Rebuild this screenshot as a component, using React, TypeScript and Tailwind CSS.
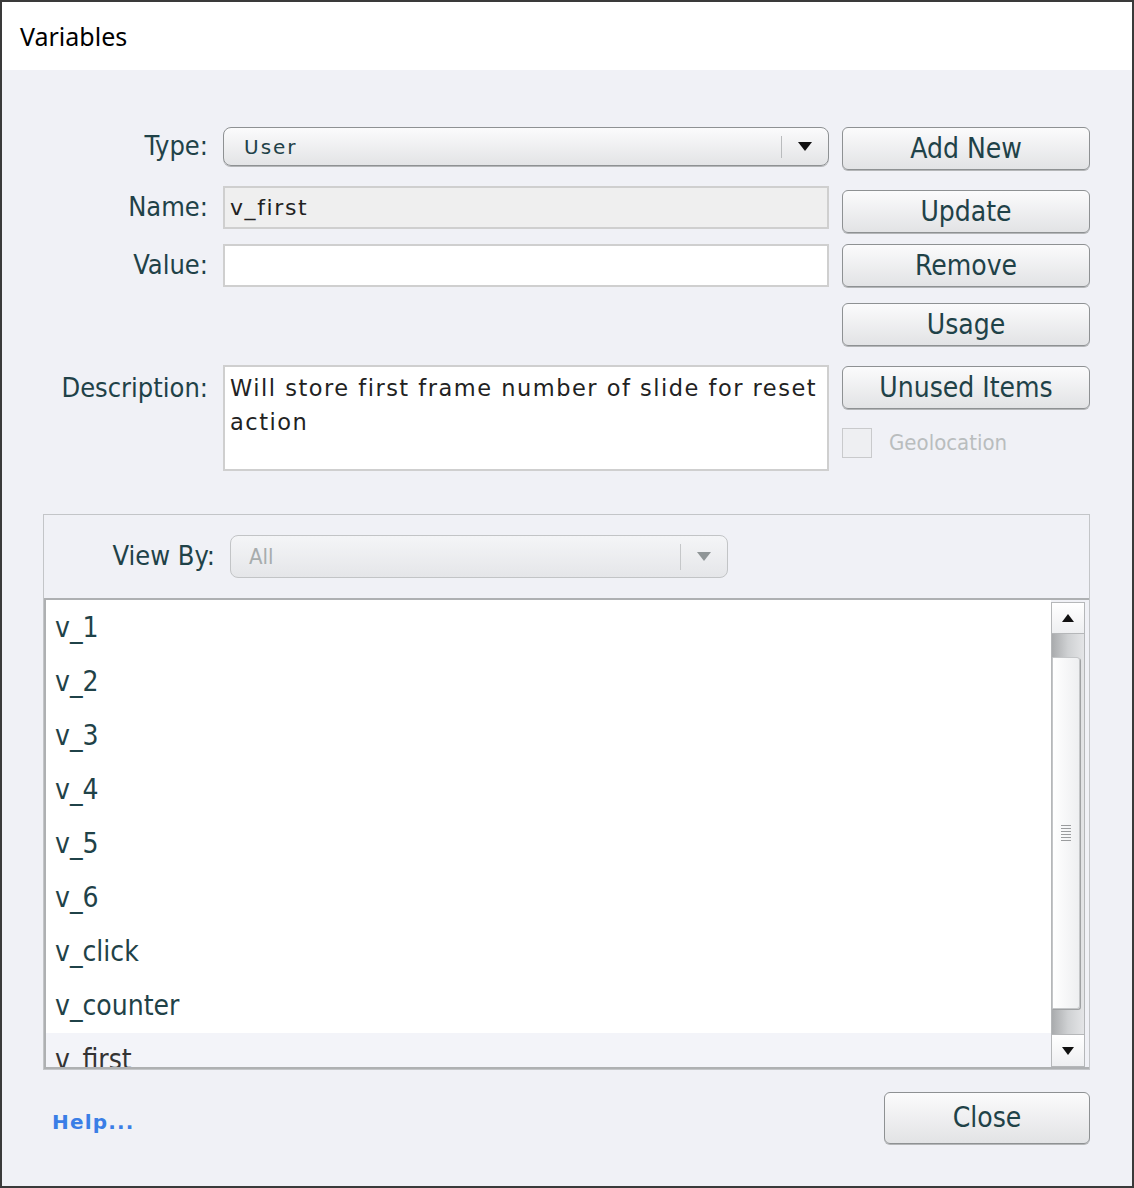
import { ReactNode } from 'react';

// condensed "Tahoma-like" face used across the dialog
const cond = "font-['DejaVu_Sans_Condensed','DejaVu_Sans',sans-serif] font-stretch-condensed";
const wide = "font-['DejaVu_Sans','Verdana',sans-serif]";

const Btn = ({ children, className = '' }: { children: ReactNode; className?: string }) => (
    <div
        className={`flex items-center justify-center rounded-[6px] border border-[#8e9193] bg-linear-to-b from-[#fbfbfc] to-[#e2e3e5] shadow-[0_1px_0_#b4b6b8] text-[28px] text-[#1f4248] ${cond} ${className}`}
    >
        {children}
    </div>
);

const Caret = ({ color }: { color: string }) => (
    <svg width="14" height="9" viewBox="0 0 14 9">
        <path d="M0 0 L14 0 L7 9 Z" fill={color} />
    </svg>
);

const Row = ({ label, children, className = '' }: { label: string; children: ReactNode; className?: string }) => (
    <div className={`flex items-center ${className}`}>
        <div className={`w-[206px] text-right text-[27px] text-[#1f4248] ${cond}`}>{label}</div>
        <div className="ml-[15px] w-[606px] h-full">{children}</div>
    </div>
);

const items = ['v_1', 'v_2', 'v_3', 'v_4', 'v_5', 'v_6', 'v_click', 'v_counter'];

const App = () => {
    return (
        <div className="w-[1134px] h-[1188px] border-2 border-[#3a3a3a] flex flex-col bg-[#f0f1f6] overflow-hidden">
            {/* TITLE BAR */}
            <div className="h-[68px] shrink-0 bg-white flex items-center pl-[18px] pt-[2px] text-[25px] text-black font-['Noto_Sans',sans-serif]">
                Variables
            </div>

            {/* FORM */}
            <div className="flex pt-[57px]">
                <div className="flex flex-col">
                    <Row label="Type:" className="h-[39px]">
                        <div className="h-full flex items-center rounded-[8px] border border-[#8e9193] bg-linear-to-b from-[#fbfbfc] to-[#e3e4e6] shadow-[0_1px_0_#b4b6b8]">
                            <span className={`ml-[20px] flex-1 text-[20px] tracking-[2px] text-[#1f4248] ${wide}`}>User</span>
                            <div className="w-px h-[22px] bg-[#b9bbbd]" />
                            <div className="w-[46px] flex justify-center">
                                <Caret color="#111" />
                            </div>
                        </div>
                    </Row>
                    <Row label="Name:" className="h-[43px] mt-[20px]">
                        <div className={`h-full flex items-center border-2 border-[#cfcfcf] bg-[#efefef] pl-[5px] text-[22px] tracking-[1.6px] text-[#222] ${wide}`}>
                            v_first
                        </div>
                    </Row>
                    <Row label="Value:" className="h-[43px] mt-[15px]">
                        <div className="h-full border-2 border-[#cfcfcf] bg-white" />
                    </Row>
                    <div className="flex items-start h-[106px] mt-[78px]">
                        <div className={`w-[206px] pt-[6px] text-right text-[27px] leading-[34px] text-[#1f4248] ${cond}`}>Description:</div>
                        <div className={`ml-[15px] w-[606px] h-full border-2 border-[#cfcfcf] bg-white pl-[5px] pt-[4px] text-[22.5px] leading-[34px] tracking-[1.5px] text-[#222] ${wide}`}>
                            Will store first frame number of slide for reset action
                        </div>
                    </div>
                </div>

                <div className="ml-[13px] w-[248px] flex flex-col">
                    <Btn className="h-[43px]">Add New</Btn>
                    <Btn className="h-[43px] mt-[20px]">Update</Btn>
                    <Btn className="h-[43px] mt-[11px]">Remove</Btn>
                    <Btn className="h-[43px] mt-[16px]">Usage</Btn>
                    <Btn className="h-[43px] mt-[20px]">Unused Items</Btn>
                    <div className="flex items-center mt-[17px]">
                        <div className="w-[30px] h-[30px] border border-[#c9cacc] bg-[#eeeff2]" />
                        <span className={`ml-[17px] text-[22px] text-[#b9bdbe] ${cond}`}>Geolocation</span>
                    </div>
                </div>
            </div>

            {/* VIEW BY GROUP */}
            <div className="ml-[41px] mt-[43px] w-[1047px] h-[556px] border border-[#c3c5c8] flex flex-col">
                <div className="flex items-center pt-[20px] pb-[20px]">
                    <div className={`w-[171px] text-right text-[27px] text-[#1f4248] ${cond}`}>View By:</div>
                    <div className="ml-[15px] w-[498px] h-[43px] flex items-center rounded-[8px] border border-[#c2c4c6] bg-linear-to-b from-[#f4f5f7] to-[#e5e6e9]">
                        <span className={`ml-[18px] flex-1 text-[22px] text-[#a7acad] ${cond}`}>All</span>
                        <div className="w-px h-[26px] bg-[#c5c7c9]" />
                        <div className="w-[46px] flex justify-center">
                            <Caret color="#8f9597" />
                        </div>
                    </div>
                </div>

                <div className="flex-1 flex border-t-2 border-l-2 border-b-2 border-[#aeb0b2] bg-white overflow-hidden">
                    <div className="flex-1 flex flex-col overflow-hidden pt-[1px]">
                        {items.map((it) => (
                            <div key={it} className={`h-[54px] shrink-0 flex items-center pl-[9px] text-[28px] text-[#1f4248] ${cond}`}>
                                {it}
                            </div>
                        ))}
                        <div className={`h-[54px] shrink-0 flex items-center pl-[9px] bg-[#f3f4f9] text-[28px] text-[#333] ${cond}`}>
                            v_first
                        </div>
                    </div>

                    {/* SCROLLBAR */}
                    <div className="w-[38px] shrink-0 bg-[#f0f1f6] flex flex-col pt-[2px] pr-[4px]">
                        <div className="h-[32px] border border-[#b5b7b9] bg-linear-to-b from-white to-[#eeeff1] flex items-center justify-center">
                            <svg width="12" height="8" viewBox="0 0 12 8"><path d="M6 0 L12 8 L0 8 Z" fill="#111" /></svg>
                        </div>
                        <div className="flex-1 flex flex-col border-x border-[#b5b7b9] bg-linear-to-r from-[#a9abad] via-[#cfd1d3] to-[#e4e5e7]">
                            <div className="h-[23px]" />
                            <div className="flex-1 mr-[4px] rounded-tr-[3px] rounded-br-[3px] border border-[#c4c6c8] bg-linear-to-r from-white to-[#eeeff1] shadow-[1px_1px_0_#9fa1a3] flex items-center justify-center">
                                <div className="flex flex-col gap-[2px] w-[10px]">
                                    <div className="h-px bg-[#9a9c9e]" />
                                    <div className="h-px bg-[#9a9c9e]" />
                                    <div className="h-px bg-[#9a9c9e]" />
                                    <div className="h-px bg-[#9a9c9e]" />
                                    <div className="h-px bg-[#9a9c9e]" />
                                    <div className="h-px bg-[#9a9c9e]" />
                                </div>
                            </div>
                            <div className="h-[25px]" />
                        </div>
                        <div className="h-[33px] border border-[#b5b7b9] bg-linear-to-b from-white to-[#eeeff1] flex items-center justify-center">
                            <svg width="12" height="8" viewBox="0 0 12 8"><path d="M0 0 L12 0 L6 8 Z" fill="#111" /></svg>
                        </div>
                    </div>
                </div>
            </div>

            {/* FOOTER */}
            <div className="flex items-center justify-between mt-[22px] ml-[50px] mr-[42px]">
                <span className={`mt-[8px] text-[20px] font-bold tracking-[1.2px] text-[#3a7ee6] ${wide}`}>Help...</span>
                <Btn className="w-[206px] h-[52px]">Close</Btn>
            </div>
        </div>
    );
};

export default App;
